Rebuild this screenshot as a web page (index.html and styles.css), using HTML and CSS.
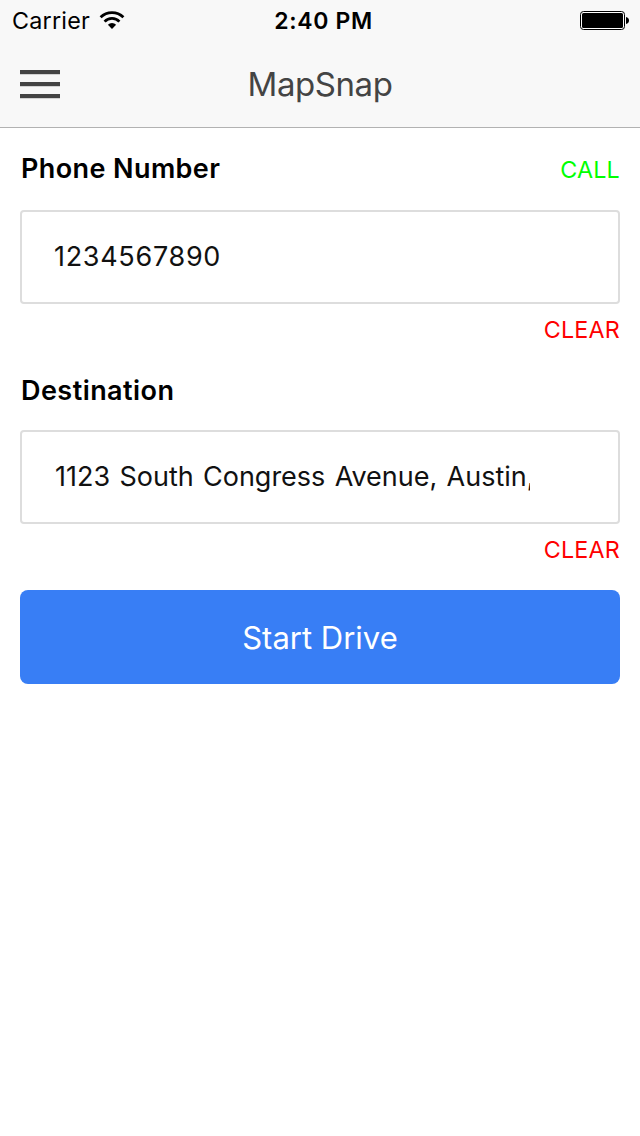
FILE: index.html
```html
<!DOCTYPE html>
<html lang="en">
<head>
<meta charset="utf-8">
<title>MapSnap</title>
<link rel="stylesheet" href="styles.css">
</head>
<body>
<header class="top">
  <div class="status">
    <div class="status-left">
      <span class="carrier">Carrier</span>
      <svg class="wifi" width="26" height="18" viewBox="0 0 26 18" fill="none" stroke="#000">
        <path d="M1.6 6.3A16.2 16.2 0 0 1 24.4 6.3" stroke-width="2.8"/>
        <path d="M5.6 10.6A10.2 10.2 0 0 1 20.4 10.6" stroke-width="2.8"/>
        <path d="M8.9 13.8A5.4 5.4 0 0 1 17.1 13.8L13 18Z" fill="#000" stroke="none"/>
      </svg>
    </div>
    <span class="time">2:40 PM</span>
    <div class="status-right">
      <svg class="battery" width="49" height="19" viewBox="0 0 49 19">
        <rect x=".5" y=".5" width="44" height="18" rx="3" fill="#fff" stroke="#000"/>
        <rect x="2" y="2" width="41" height="15" rx="1.5"/>
        <path d="M46 6C48 6.3 49 7.6 49 9.5S48 12.7 46 13Z"/>
      </svg>
    </div>
  </div>
  <div class="nav">
    <button class="menu" aria-label="Menu">
      <svg width="40" height="29" viewBox="0 0 40 29" fill="#444">
        <rect width="40" height="4.2"/><rect y="12" width="40" height="4.2"/><rect y="24" width="40" height="4.2"/>
      </svg>
    </button>
    <h1 class="title">MapSnap</h1>
  </div>
</header>
<main class="content">
  <div class="row row-phone">
    <label class="label phone-label" for="phone">Phone Number</label>
    <a class="link call">CALL</a>
  </div>
  <input class="field phone" id="phone" value="1234567890">
  <div class="clear-row"><a class="link clear">CLEAR</a></div>
  <div class="row row-dest"><label class="label dest-label" for="dest">Destination</label></div>
  <input class="field dest" id="dest" value="1123 South Congress Avenue, Austin, TX">
  <div class="clear-row"><a class="link clear">CLEAR</a></div>
  <button class="start">Start Drive</button>
</main>
</body>
</html>
```
FILE: styles.css
```css
* { box-sizing: border-box; }
body { margin: 0; background: #fff; color: #000; font-family: Inter, "Liberation Sans", sans-serif; }
button { border: 0; padding: 0; font-family: inherit; }
svg { display: block; }
.top { height: 128px; background: #f8f8f8; border-bottom: 1px solid #b2b2b2; }
.status { height: 40px; display: grid; grid-template-columns: 1fr auto 1fr; align-items: start; padding: 0 11px 0 12px; }
.status-left { display: flex; align-items: flex-start; gap: 9px; }
.wifi, .battery { margin-top: 11px; }
.carrier { font-size: 23.3px; line-height: 41px; letter-spacing: 0.25px; }
.time { font-size: 23px; font-weight: 600; letter-spacing: 0.65px; line-height: 42px; padding-left: 6px; }
.status-right { display: flex; justify-content: flex-end; }
.nav { height: 88px; display: grid; grid-template-columns: 40px 1fr 40px; align-items: center; padding: 0 20px; }
.menu { background: none; }
.title { margin: 0; text-align: center; font-size: 33px; font-weight: 400; color: #444; line-height: 88px; letter-spacing: -0.45px; padding-bottom: 1px; }
.content { padding: 0 20px; }
.row { display: flex; justify-content: space-between; align-items: center; }
.row-phone { height: 82px; }
.row-dest { height: 74px; padding-bottom: 4px; }
.label { font-size: 27px; font-weight: 600; line-height: 40px; padding-left: 1px; }
.phone-label { letter-spacing: 0.4px; }
.dest-label { letter-spacing: 0.45px; }
.link { font-size: 23.3px; line-height: 40px; letter-spacing: 0.2px; }
.call { color: #0f0; padding-top: 2px; }
.clear { color: #f00; }
.field { display: block; width: 100%; height: 94px; border: 2px solid #ddd; border-radius: 4px; padding: 0 88px 2px 32px; font-family: inherit; font-size: 27px; color: #111; background: #fff; outline: 0; }
.phone { letter-spacing: 0.7px; }
.dest { word-spacing: 1.7px; padding-left: 33px; }
.clear-row { height: 52px; display: flex; justify-content: flex-end; align-items: center; }
.start { display: block; width: 100%; height: 94px; margin-top: 14px; border-radius: 8px; background: #387ef5; color: #fff; font-size: 31px; line-height: 94px; letter-spacing: 0; padding-top: 1px; }
```
